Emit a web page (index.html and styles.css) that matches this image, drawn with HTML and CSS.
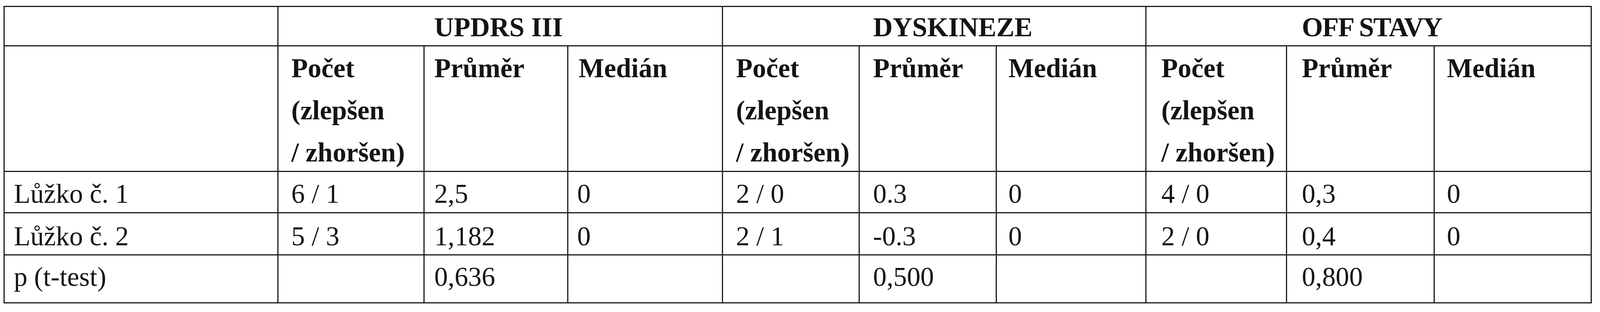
FILE: index.html
```html
<!DOCTYPE html>
<html lang="cs">
<head>
<meta charset="utf-8">
<title>Tabulka</title>
<link rel="stylesheet" href="styles.css">
</head>
<body>
<div class="results" role="table">
  <div class="cell hd r1" role="columnheader"></div>
  <div class="cell hd r1 grp grp-u" role="columnheader">UPDRS III</div>
  <div class="cell hd r1 grp grp-d" role="columnheader">DYSKINEZE</div>
  <div class="cell hd r1 grp grp-o" role="columnheader">OFF STAVY</div>

  <div class="cell hd r2 c0" role="columnheader"></div>
  <div class="cell hd r2 u1" role="columnheader">Počet<br>(zlepšen<br>/ zhoršen)</div>
  <div class="cell hd r2 u2" role="columnheader">Průměr</div>
  <div class="cell hd r2 u3" role="columnheader">Medián</div>
  <div class="cell hd r2 d1" role="columnheader">Počet<br>(zlepšen<br>/ zhoršen)</div>
  <div class="cell hd r2 d2" role="columnheader">Průměr</div>
  <div class="cell hd r2 d3" role="columnheader">Medián</div>
  <div class="cell hd r2 o1" role="columnheader">Počet<br>(zlepšen<br>/ zhoršen)</div>
  <div class="cell hd r2 o2" role="columnheader">Průměr</div>
  <div class="cell hd r2 o3" role="columnheader">Medián</div>

  <div class="cell r3 c0" role="cell">Lůžko č. 1</div>
  <div class="cell r3 u1" role="cell">6 / 1</div>
  <div class="cell r3 u2" role="cell">2,5</div>
  <div class="cell r3 u3 num" role="cell">0</div>
  <div class="cell r3 d1" role="cell">2 / 0</div>
  <div class="cell r3 d2" role="cell">0.3</div>
  <div class="cell r3 d3" role="cell">0</div>
  <div class="cell r3 o1" role="cell">4 / 0</div>
  <div class="cell r3 o2" role="cell">0,3</div>
  <div class="cell r3 o3" role="cell">0</div>

  <div class="cell r4 c0" role="cell">Lůžko č. 2</div>
  <div class="cell r4 u1" role="cell">5 / 3</div>
  <div class="cell r4 u2" role="cell">1,182</div>
  <div class="cell r4 u3 num" role="cell">0</div>
  <div class="cell r4 d1" role="cell">2 / 1</div>
  <div class="cell r4 d2" role="cell">-0.3</div>
  <div class="cell r4 d3" role="cell">0</div>
  <div class="cell r4 o1" role="cell">2 / 0</div>
  <div class="cell r4 o2" role="cell">0,4</div>
  <div class="cell r4 o3" role="cell">0</div>

  <div class="cell r5 c0" role="cell">p (t-test)</div>
  <div class="cell r5 u1" role="cell"></div>
  <div class="cell r5 u2" role="cell">0,636</div>
  <div class="cell r5 u3" role="cell"></div>
  <div class="cell r5 d1" role="cell"></div>
  <div class="cell r5 d2" role="cell">0,500</div>
  <div class="cell r5 d3" role="cell"></div>
  <div class="cell r5 o1" role="cell"></div>
  <div class="cell r5 o2" role="cell">0,800</div>
  <div class="cell r5 o3" role="cell"></div>
</div>
</body>
</html>
```

FILE: styles.css
```css
html, body {
  margin: 0;
  padding: 0;
  background: #ffffff;
}

body {
  font-family: "Liberation Serif", "Times New Roman", serif;
  font-size: min(78px, 1.6913vw);
  color: #141414;
}

/* layout scales with the window width (designed on a 4612px canvas) */
.results {
  display: grid;
  grid-template-columns: 789fr 421fr 415fr 446fr 394fr 395fr 431fr 405fr 426fr 453fr;
  grid-template-rows: 101px 322px 106px 108px 123px;
  width: 99.263vw;
  box-sizing: border-box;
  margin: 15px 0 0 0.2277vw;
  border-left: 3px solid #1c1c1c;
  border-top: 3px solid #1c1c1c;
}

.cell {
  box-sizing: border-box;
  min-width: 0;
  border-right: 3px solid #1c1c1c;
  border-bottom: 3px solid #1c1c1c;
  white-space: nowrap;
  overflow: hidden;
  padding-left: 0.65vw;
}

.hd {
  font-weight: bold;
}

.grp {
  grid-column: span 3;
}

.r1 { line-height: 103px; }
.r2 { line-height: 108px; padding-top: 2px; }
.r3 { line-height: 111px; }
.r4 { line-height: 117px; }
.r5 { line-height: 109px; }

.grp-u { padding-left: 9.735vw; }
.grp-d { padding-left: 9.367vw; }
.grp-o { padding-left: 9.714vw; letter-spacing: -0.025em; }

.c0 { padding-left: 0.564vw; }
.u1 { padding-left: 0.802vw; }
.u2 { padding-left: 0.607vw; }
.u3 { padding-left: 0.629vw; }
.u3.num { padding-left: 0.542vw; }
.d1 { padding-left: 0.802vw; }
.d2 { padding-left: 0.824vw; }
.d3 { padding-left: 0.716vw; }
.o1 { padding-left: 0.932vw; }
.o2 { padding-left: 0.932vw; }
.o3 { padding-left: 0.759vw; }
```
